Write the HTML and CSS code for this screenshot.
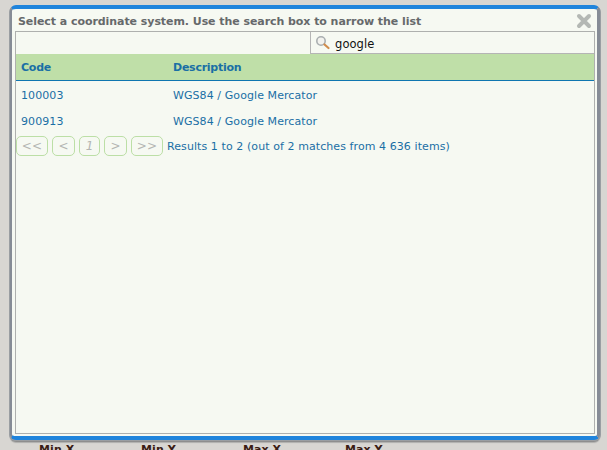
FILE: index.html
```html
<!DOCTYPE html>
<html lang="en">
<head>
<meta charset="utf-8">
<title>Select a coordinate system</title>
<link rel="stylesheet" href="styles.css">
</head>
<body>
<div class="dialog">
  <div class="title-row">
    <span class="title">Select a coordinate system. Use the search box to narrow the list</span>
    <svg class="close" width="16" height="16" viewBox="0 0 16 16" aria-label="Close"><path d="M3 3 L13 13 M13 3 L3 13" stroke="#b4b8b4" stroke-width="4" stroke-linecap="round"/></svg>
  </div>
  <div class="panel">
    <div class="search-row">
      <div class="search">
        <svg width="16" height="16" viewBox="0 0 16 16"><circle cx="6" cy="6" r="4.2" fill="#f2f2ee" stroke="#a9aeb0" stroke-width="1.6"/><path d="M9.5 9.5 L13.5 13" stroke="#d08c4c" stroke-width="2.2" stroke-linecap="round"/></svg>
        <span class="query">google</span>
      </div>
    </div>
    <table class="grid">
      <thead><tr><th class="c1">Code</th><th>Description</th></tr></thead>
      <tbody>
        <tr><td>100003</td><td>WGS84 / Google Mercator</td></tr>
        <tr><td>900913</td><td>WGS84 / Google Mercator</td></tr>
      </tbody>
    </table>
    <div class="pager">
      <span class="btn w32">&lt;&lt;</span>
      <span class="btn w24">&lt;</span>
      <span class="btn w22 italic">1</span>
      <span class="btn w24">&gt;</span>
      <span class="btn w32">&gt;&gt;</span>
      <span class="results">Results 1 to 2 (out of 2 matches from 4 636 items)</span>
    </div>
  </div>
</div>
<div class="under">
  <span>Min X</span><span>Min Y</span><span>Max X</span><span>Max Y</span>
</div>
</body>
</html>
```
FILE: styles.css
```css
html, body { margin: 0; padding: 0; height: 450px; overflow: hidden; }
body { background: #d8d6d2; font-family: "DejaVu Sans", sans-serif; font-size: 11px; color: #1a6fa5; letter-spacing: 0.08px; }
.dialog {
  box-sizing: border-box;
  width: 590px; height: 435px;
  margin: 5px 0 0 10px;
  padding: 0 2px 0 3px;
  background: #f6f9f2;
  border-top: 4px solid #1f84dc;
  border-bottom: 4px solid #1f84dc;
  border-left: 2px solid #868c96;
  border-right: 3px solid #868c96;
  border-radius: 6px;
  box-shadow: -1px 1px 0 #9a9ea2, 1px 1px 0 #9a9ea2, 0 2px 1px #8a8a8a, 0 3px 1px #b4b4b2;
  display: flex; flex-direction: column;
}
.title-row { height: 22px; box-sizing: border-box; display: flex; align-items: center; justify-content: space-between; padding: 2px 3px 0 3px; flex: none; }
.title { font-weight: bold; font-size: 11px; letter-spacing: -0.06px; color: #66696b; white-space: nowrap; }
.panel { flex: none; height: 403px; box-sizing: border-box; border: 1px solid #aeb0ae; display: flex; flex-direction: column; }
.search-row { height: 22px; display: flex; justify-content: flex-end; flex: none; }
.search { box-sizing: border-box; width: 284px; height: 22px; border-left: 1px solid #b5b5b5; border-bottom: 1px solid #b5b5b5; display: flex; align-items: center; padding-left: 4px; gap: 4px; }
.query { color: #111; font-size: 11.5px; padding-top: 2px; }
.grid { border-collapse: collapse; width: 100%; table-layout: fixed; font-size: 11px; }
.grid th { background: #bfdfa8; border-bottom: 1px solid #0f76b0; height: 26px; padding: 0 0 0 5px; text-align: left; font-weight: bold; font-size: 11px; letter-spacing: -0.25px; color: #1a6fa5; }
.grid th.c1 { width: 147px; }
.grid td { height: 24px; padding: 2px 0 0 5px; }
.pager { display: flex; align-items: center; height: 26px; }
.btn { box-sizing: border-box; height: 20px; border: 1px solid #bcdfa6; border-radius: 5px; margin-right: 4px; display: flex; align-items: center; justify-content: center; color: #b4b6b2; font-size: 12px; }
.w32 { width: 32px; }
.w24 { width: 23px; }
.w22 { width: 21px; }
.italic { font-style: italic; }
.results { white-space: nowrap; }
.under { display: flex; padding-left: 39px; margin-top: 3px; font-weight: bold; font-size: 11px; color: #3a1c14; }
.under span { width: 102px; flex: none; }
```
